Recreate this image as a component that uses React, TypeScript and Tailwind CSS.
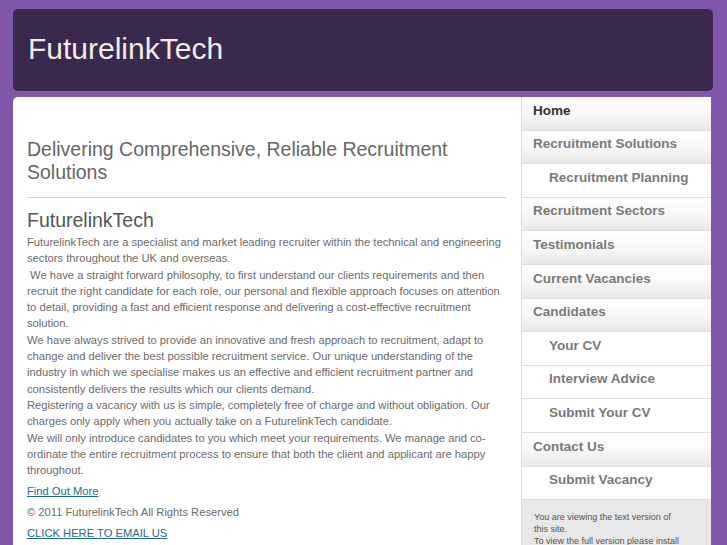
const navItems: { label: string; sub?: boolean; active?: boolean }[] = [
  { label: 'Home', active: true },
  { label: 'Recruitment Solutions' },
  { label: 'Recruitment Planning', sub: true },
  { label: 'Recruitment Sectors' },
  { label: 'Testimonials' },
  { label: 'Current Vacancies' },
  { label: 'Candidates' },
  { label: 'Your CV', sub: true },
  { label: 'Interview Advice', sub: true },
  { label: 'Submit Your CV', sub: true },
  { label: 'Contact Us' },
  { label: 'Submit Vacancy', sub: true },
];

export default function App() {
  return (
    <div
      className="min-h-[545px] bg-[#8157ab] px-[13px] pt-[9px] pr-[14px]"
      style={{ fontFamily: '"Liberation Sans", Arial, sans-serif' }}
    >
      <header className="h-[82px] rounded-[5px] bg-[#3a294d] flex items-center pl-[15px]">
        <h1 className="text-[30px] text-[#f1ece4] leading-none -mt-[2px]">FuturelinkTech</h1>
      </header>

      <div className="mt-[6px] mr-[2px] flex bg-white rounded-tl-[5px] rounded-tr-[5px] min-h-[450px]">
        <main className="w-[508px] pl-[14px] pr-[15px] pt-[41px]">
          <h2 className="text-[19.5px] leading-[23px] text-[#666]">
            Delivering Comprehensive, Reliable Recruitment Solutions
          </h2>
          <hr className="mt-[13px] border-0 h-px bg-[#d4d4d4]" />
          <h3 className="mt-[11px] text-[19.5px] leading-[22px] text-[#555]">FuturelinkTech</h3>
          <div className="text-[11.2px] leading-[16.3px] text-[#6b6b6b] mt-[3px]">
            <p>
              FuturelinkTech are a specialist and market leading recruiter within the technical and engineering sectors throughout the UK and overseas.
            </p>
            <p>
              &nbsp;We have a straight forward philosophy, to first understand our clients requirements and then recruit the right candidate for each role, our personal and flexible approach focuses on attention to detail, providing a fast and efficient response and delivering a cost-effective recruitment solution.
            </p>
            <p>
              We have always strived to provide an innovative and fresh approach to recruitment, adapt to change and deliver the best possible recruitment service. Our unique understanding of the industry in which we specialise makes us an effective and efficient recruitment partner and consistently delivers the results which our clients demand.
            </p>
            <p>
              Registering a vacancy with us is simple, completely free of charge and without obligation. Our charges only apply when you actually take on a FuturelinkTech candidate.
            </p>
            <p>
              We will only introduce candidates to you which meet your requirements. We manage and co-ordinate the entire recruitment process to ensure that both the client and applicant are happy throughout.
            </p>
            <p className="mt-[5px]">
              <a href="#" className="text-[#1f6a94] underline">Find Out More</a>
            </p>
            <p className="mt-[4px]">© 2011 FuturelinkTech All Rights Reserved</p>
            <p className="mt-[5px]">
              <a href="#" className="text-[#1f6a94] underline">CLICK HERE TO EMAIL US</a>
            </p>
          </div>
        </main>

        <aside className="w-[190px] border-l border-[#dcdcdc]">
          <ul>
            {navItems.map((item) => (
              <li
                key={item.label}
                className={
                  'h-[33.6px] flex items-center pb-[5px] border-b border-[#dedede] text-[13.5px] font-bold ' +
                  (item.sub
                    ? 'bg-white pl-[27px] '
                    : 'bg-gradient-to-b from-white via-[#f8f8f8] to-[#e8e8e8] pl-[11px] ') +
                  (item.active ? 'text-[#333]' : 'text-[#7a7a7a]')
                }
              >
                {item.label}
              </li>
            ))}
          </ul>
          <div className="bg-[#e8e8e8] px-[12px] pt-[11px] pb-[10px] text-[9px] leading-[12px] text-[#555]">
            You are viewing the text version of
            <br />
            this site.
            <br />
            To view the full version please install
          </div>
        </aside>
      </div>
    </div>
  );
}
